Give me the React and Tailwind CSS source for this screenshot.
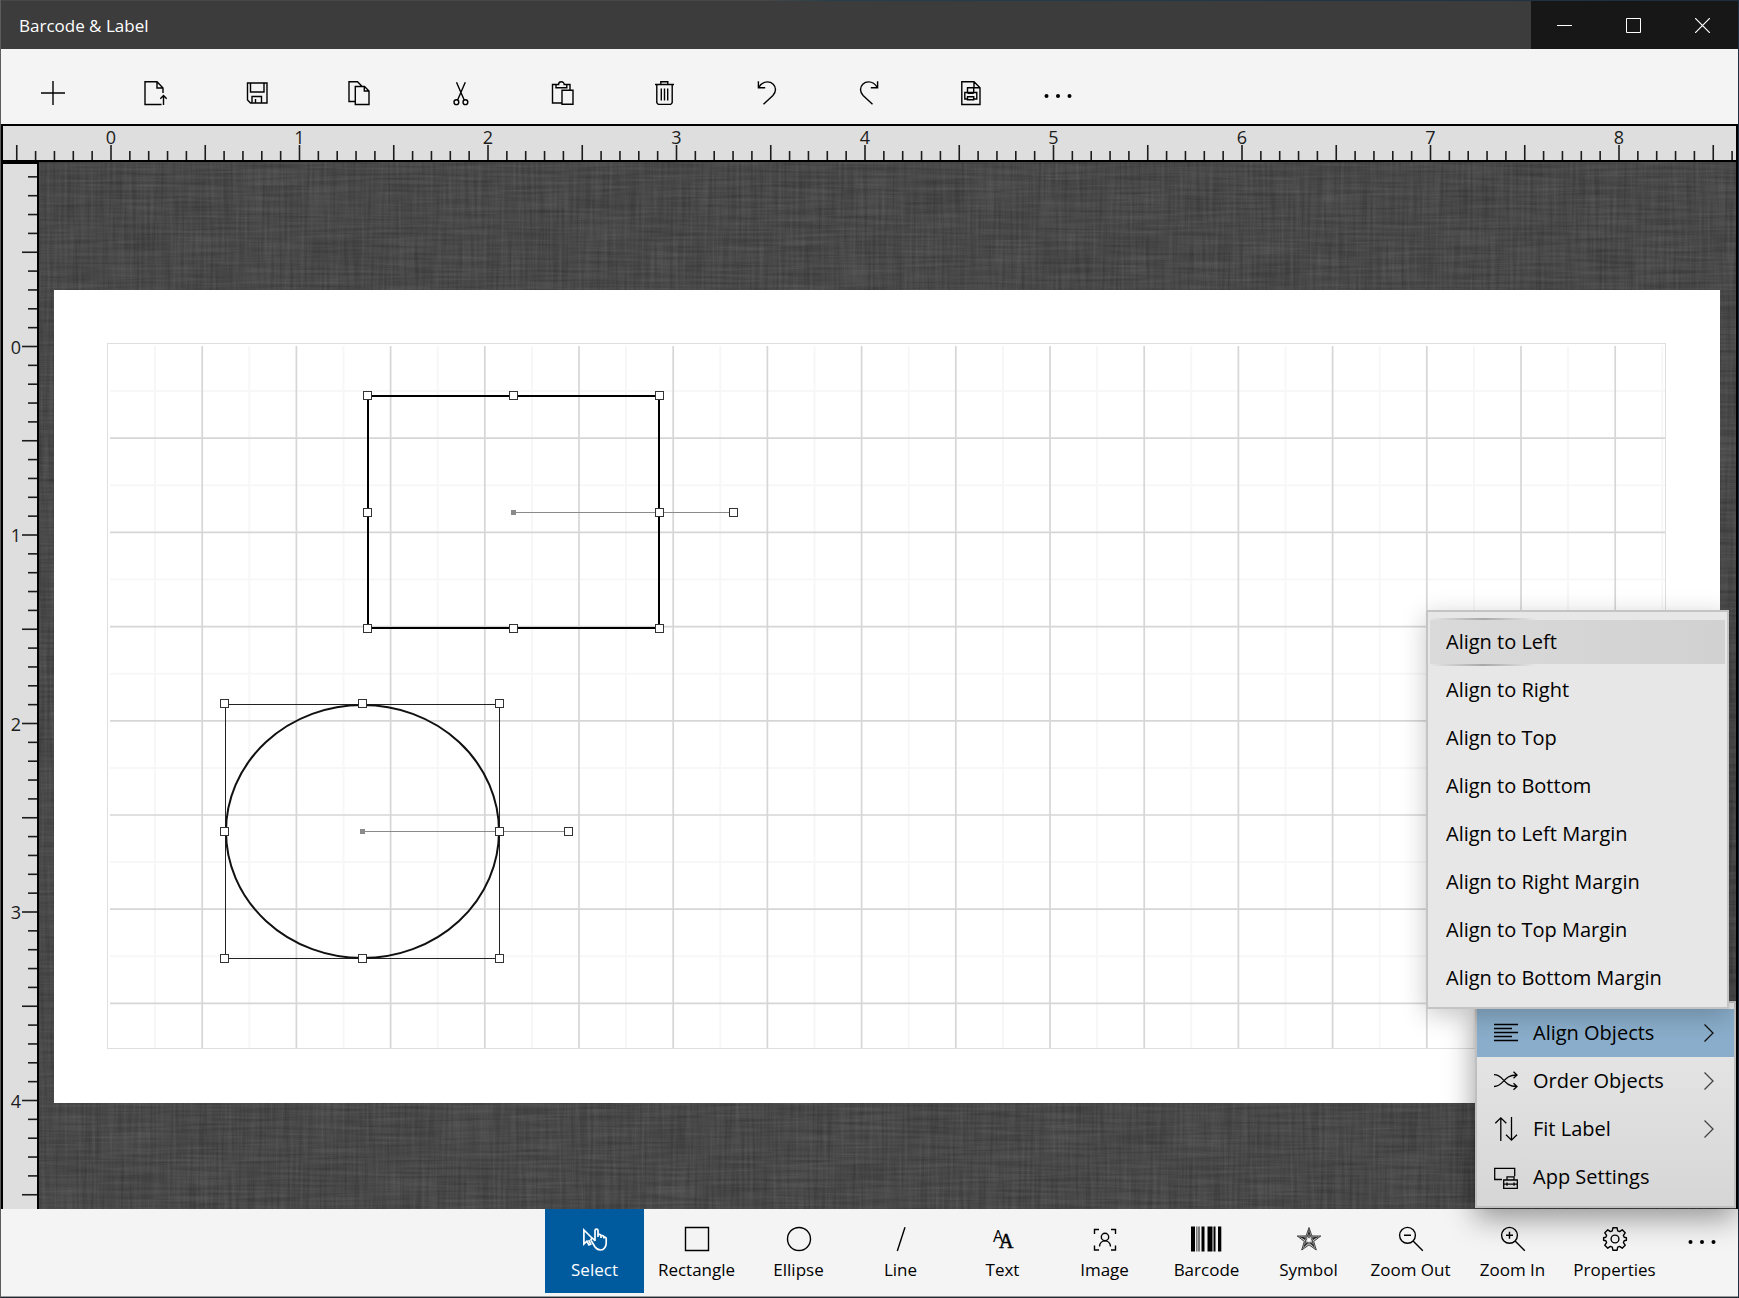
import { useState } from "react";

const UNIT = 188.5;
const GRID_STEP = 47.1;

function Icon({ children, size = 24, className = "", strokeWidth = 1.4 }) {
  return (
    <svg
      width={size}
      height={size}
      viewBox="0 0 24 24"
      fill="none"
      stroke="currentColor"
      strokeWidth={strokeWidth}
      className={`shrink-0 overflow-visible ${className}`}
      aria-hidden="true"
    >
      {children}
    </svg>
  );
}

function Dots() {
  return (
    <Icon>
      <g fill="currentColor" stroke="none">
        <circle cx="0.5" cy="12" r="2" />
        <circle cx="12" cy="12" r="2" />
        <circle cx="23.5" cy="12" r="2" />
      </g>
    </Icon>
  );
}

const fileActions = [
  { label: "New", icon: <path d="M12 0v24M0 12h24" /> },
  {
    label: "Open",
    icon: <path d="M20 12V7l-6-6.2H2v22.7h16.5M14 .8V7h6M20.5 24v-9.5M17.3 17.7l3.2-3.2 3.2 3.2" />,
  },
  {
    label: "Save",
    icon: <path d="M2.5 2H22v20H5.5l-3-3zM5.5 2v9H19V2M7 22v-6.5h9.5V22M10.5 18v4" />,
  },
  {
    label: "Copy",
    icon: <path d="M8 20.5H2V.8h8.5l4.7 4.7M8.3 5.5h9.2L22 10v13.5H8.3zM17.3 5.5V10H22" />,
  },
  {
    label: "Cut",
    icon: (
      <>
        <path d="M7.5 1.3 15.2 19M16.3 1.3 8.6 19" />
        <circle cx="7.4" cy="21.2" r="2.4" />
        <circle cx="16.4" cy="21.2" r="2.4" />
      </>
    ),
  },
  {
    label: "Paste",
    icon: (
      <path d="M11 22H1.500V3.500H5M15.500 3.500H19V9M5 3.500v3.300h10.800V3.500h-2.600c0-3.700-5.600-3.700-5.600 0zM11 9.300h11v14H11z" />
    ),
  },
  {
    label: "Delete",
    icon: <path d="M2 3.500h19M7.800 3.500V.8h7v2.700M3.800 3.500v18.300l1.500 1.600h12.400l1.500-1.600V3.500M8.300 7.500v12M11.500 7.500v12M14.700 7.500v12" />,
  },
  {
    label: "Undo",
    icon: <path d="M3.4.3v6.5h6.800M3.600 6.600C6 2.600 9 .9 12.300.9c4.900 0 8.200 3.500 8.200 7.700 0 2.300-1 4.100-2.600 5.800L8.500 23.300" />,
  },
  {
    label: "Redo",
    icon: <path d="M20.600.3v6.500h-6.800M20.400 6.600C18 2.600 15 .9 11.700.9 6.800.9 3.500 4.400 3.500 8.600c0 2.300 1 4.100 2.600 5.800l9.400 8.900" />,
  },
  {
    label: "Print",
    icon: (
      <path d="M2.800.8H15l6 6v16.700H2.800zM15 .8v6h6M8.500 12V6.800h6.200V12M8.500 18H5.800v-6.500h12V18h-3M8.500 12.300h6.200M8.500 15.700h6.200v3H8.500z" />
    ),
  },
];

const tools = [
  {
    label: "Select",
    icon: (
      <g strokeWidth="1.700">
        <path d="M9.500 11.500.9 3v14l3-2.800 2 3.800 1.800-.8-2-4" />
        <path d="M12 14V3.600c0-2 3-2 3 0V10M15 8.300c.3-1.300 3-1.200 3 .4V11M18 9.200c.5-1 2.800-.8 2.800.6v1.700M20.800 10.500c.8-.8 2.400-.3 2.400 1.200v4.600c0 3-2 6.700-5.600 6.700-3 0-4.400-1.200-5.700-3.200l-3.700-6.200c-.9-1.600 1-2.800 2.200-1.600l1.700 1.900" />
      </g>
    ),
  },
  { label: "Rectangle", icon: <path d="M.5.5h23v23H.5z" /> },
  { label: "Ellipse", icon: <circle cx="12" cy="12" r="11.500" /> },
  { label: "Line", icon: <path d="M16 .3 8.300 24" /> },
  {
    label: "Text",
    icon: (
      <g fill="currentColor" stroke="none">
        <text x="2" y="15" fontSize="16" fontFamily="Open Sans">A</text>
        <text x="8" y="21" fontSize="20" stroke="currentColor" strokeWidth="0.5" fontFamily="Liberation Serif">A</text>
      </g>
    ),
  },
  {
    label: "Image",
    icon: (
      <>
        <path d="M1.500 7V2.500H6M18 2.500h4.500V7M22.500 18.500V23H18M6 23H1.500v-4.500" />
        <circle cx="12" cy="10" r="3.700" />
        <path d="M6.500 19.500c.5-7.500 10.500-7.500 11 0" />
      </>
    ),
  },
  {
    label: "Barcode",
    icon: (
      <g fill="currentColor" stroke="none">
        <path d="M-4-.5H0v25h-4zM1.500-.5h.8v25h-.8zM3.500-.5h1v25h-1zM6.500-.5h3v25h-3zM12.500-.5h5v25h-5zM18.500-.5h2v25h-2zM23-.5h3.300v25H23z" />
      </g>
    ),
  },
  {
    label: "Symbol",
    icon: (
      <>
        <path
          d="M12 .5 14.900 8.900 23.800 9l-7.100 5.400 2.600 8.600-7.300-5.100L4.700 23l2.600-8.600L.2 9l8.900-.1z"
          fill="#c4c4c4"
          strokeWidth="0.700"
        />
        <path d="M12 3v8M21 9.900l-7 2.400M17.500 20.500l-4-5.500M6.500 20.500l4-5.500M3 9.900l7 2.400" strokeWidth="0.800" />
        <path d="M12 5.500l2 4.600 4.800.3-3.700 3.200 1.400 4.900-4.500-2.800-4.500 2.800 1.400-4.900-3.700-3.200 4.800-.3z" strokeWidth="0.700" />
        <circle cx="12" cy="13" r="1.800" fill="white" stroke="none" />
      </>
    ),
  },
  {
    label: "Zoom Out",
    icon: (
      <>
        <circle cx="8.500" cy="8.300" r="7.900" />
        <path d="M14.100 13.900l9.700 9.900M5 8.300h7" />
      </>
    ),
  },
  {
    label: "Zoom In",
    icon: (
      <>
        <circle cx="8.500" cy="8.300" r="7.900" />
        <path d="M14.100 13.900l9.700 9.900M5 8.300h7M8.500 4.800v7" />
      </>
    ),
  },
  {
    label: "Properties",
    icon: (
      <>
        <path
          strokeLinejoin="round"
          d="M9.900.8h4.200l.6 3 1.900.8 2.600-1.800 3 3-1.800 2.600.8 1.900 2.200.5v2.400l-2.200.5-.8 1.900 1.800 2.600-3 3-2.600-1.800-1.900.8-.6 3H9.900l-.6-3-1.900-.8-2.600 1.800-3-3 1.800-2.600-.8-1.900-2.200-.5v-2.400l2.200-.5.8-1.900-1.800-2.600 3-3 2.600 1.800 1.900-.8z"
        />
        <circle cx="12" cy="12" r="3.900" />
      </>
    ),
  },
];

const alignItems = [
  "Align to Left",
  "Align to Right",
  "Align to Top",
  "Align to Bottom",
  "Align to Left Margin",
  "Align to Right Margin",
  "Align to Top Margin",
  "Align to Bottom Margin",
];

const menuItems = [
  { label: "Align Objects", sub: true, icon: <path d="M0 3.500h24M0 7.500h18M0 11.500h24M0 15.500h18M0 19.500h24" /> },
  {
    label: "Order Objects",
    sub: true,
    icon: (
      <path d="M0 5.700c10 0 9 11.800 22.500 11.800M0 17.500C10 17.500 9 6 22.500 6M19.500 2.800 23 6l-3.500 3.200M19.500 14.300l3.500 3.200-3.500 3.200" />
    ),
  },
  {
    label: "Fit Label",
    sub: true,
    icon: <path d="M6.800 24V.8M1.300 6.300 6.800.8l5.500 5.500M17.500 0v23.200M12 17.700l5.500 5.500 5.500-5.500" />,
  },
  {
    label: "App Settings",
    sub: false,
    icon: <path d="M8 14.500H.7V3.300h20v8M9.700 15h13.600v8.300H9.700zM13 15v-3.200h7V15M9.700 19.200h13.600M13 17.500v3.300M20 17.500v3.300" />,
  },
];

function Ticks({ vertical, origin, from, to }) {
  const ticks = [];
  for (let i = from; i <= to; i++) {
    const pos = origin + (i * UNIT) / 10;
    const start = i % 5 === 0 ? 19 : 25;
    ticks.push(
      vertical ? (
        <line key={i} x1={start} x2="34" y1={pos} y2={pos} />
      ) : (
        <line key={i} y1={start} y2="34" x1={pos} x2={pos} />
      )
    );
  }
  const labels = [];
  for (let n = 0; n * 10 <= to; n++) {
    const pos = origin + n * UNIT;
    labels.push(
      <text key={n} x={vertical ? 13 : pos} y={vertical ? pos + 7 : 18} textAnchor="middle">
        {n}
      </text>
    );
  }
  return (
    <svg className="block h-full w-full" aria-hidden="true">
      <g stroke="#1c1c1c" strokeWidth="1.6">{ticks}</g>
      <g fill="#1c1c1c" fontSize="18">{labels}</g>
    </svg>
  );
}

// two stretched noise layers, crossed like threads
function Linen() {
  return (
    <svg className="absolute inset-0 h-full w-full" aria-hidden="true">
      <filter id="warp" x="0" y="0" width="100%" height="100%" colorInterpolationFilters="sRGB">
        <feTurbulence type="fractalNoise" baseFrequency="0.35 0.015" numOctaves="3" seed="4" />
        <feColorMatrix values="0.2 0 0 0 0.185  0.2 0 0 0 0.185  0.2 0 0 0 0.185  0 0 0 0 1" />
      </filter>
      <filter id="weft" x="0" y="0" width="100%" height="100%" colorInterpolationFilters="sRGB">
        <feTurbulence type="fractalNoise" baseFrequency="0.015 0.35" numOctaves="3" seed="9" />
        <feColorMatrix values="0.2 0 0 0 0.185  0.2 0 0 0 0.185  0.2 0 0 0 0.185  0 0 0 0 1" />
      </filter>
      <rect width="100%" height="100%" filter="url(#warp)" />
      <rect width="100%" height="100%" filter="url(#weft)" opacity="0.5" />
    </svg>
  );
}

function Handles({ xs, ys, rotateX }) {
  const [left, mid, right] = xs;
  const [top, center, bottom] = ys;
  const spots = [
    [left, top], [mid, top], [right, top],
    [left, center], [right, center], [rotateX, center],
    [left, bottom], [mid, bottom], [right, bottom],
  ];
  return (
    <g>
      <line x1={mid} x2={rotateX} y1={center} y2={center} stroke="#8a8a8a" />
      <rect x={mid - 2.5} y={center - 2.5} width="5" height="5" fill="#8a8a8a" />
      {spots.map(([x, y]) => (
        <rect key={`${x}-${y}`} x={x - 4} y={y - 4} width="8" height="8" fill="white" stroke="#333" />
      ))}
    </g>
  );
}

function LabelGrid() {
  const steps = Array.from({ length: 40 }, (_, i) => i + 1);
  const minor = steps.filter((i) => i % 2 === 1);
  const major = steps.filter((i) => i % 2 === 0);
  const lines = (list) =>
    list.map((i) => (
      <g key={i}>
        <line x1={i * GRID_STEP} x2={i * GRID_STEP} y1="2" y2="100%" />
        <line y1={i * GRID_STEP} y2={i * GRID_STEP} x1="2" x2="100%" />
      </g>
    ));
  return (
    <svg className="block h-full w-full" role="img" aria-label="Label">
      <g stroke="#f7f7f7" strokeWidth="2">{lines(minor)}</g>
      <g stroke="#d6d6d6" strokeWidth="1.7">{lines(major)}</g>
      <rect x="260" y="52" width="291" height="232" fill="none" stroke="black" strokeWidth="2" />
      <Handles xs={[259.5, 405.5, 551.5]} ys={[51.5, 168.5, 284.5]} rotateX={625.5} />
      <rect x="117.5" y="360.5" width="274" height="254" fill="none" stroke="#222" />
      <ellipse cx="254.5" cy="487.5" rx="136.5" ry="126.5" fill="none" stroke="#111" strokeWidth="2" />
      <Handles xs={[116.5, 254.5, 391.5]} ys={[359.5, 487.5, 614.5]} rotateX={460.5} />
    </svg>
  );
}

const captionButton = "flex w-[69px] items-center justify-center pr-0.5";

function TitleBar() {
  return (
    <header className="flex h-12 shrink-0 items-center justify-between bg-[#3c3c3c] text-white">
      <h1 className="pl-[18px] pt-0.5 text-[17px]">Barcode &amp; Label</h1>
      <div className="flex h-full bg-[#171717]">
        <button type="button" aria-label="Minimize" className={captionButton}>
          <svg width="15" height="15" stroke="white"><path d="M0 7.500h15" /></svg>
        </button>
        <button type="button" aria-label="Maximize" className={captionButton}>
          <svg width="15" height="15" stroke="white" fill="none"><path d="M.5.5h14v14H.5z" /></svg>
        </button>
        <button type="button" aria-label="Close" className={captionButton}>
          <svg width="15" height="15" stroke="white" strokeWidth="1.2"><path d="M0 0l15 15M15 0 0 15" /></svg>
        </button>
      </div>
    </header>
  );
}

function AlignMenu() {
  return (
    <div
      role="menu"
      aria-label="Align Objects"
      className="absolute bottom-[200px] right-[7px] z-20 w-[303px] border-2 border-[#c4c4c4] bg-[#e7e7e7] pb-[5px] pt-[6px] shadow-[0_6px_24px_rgba(0,0,0,0.22)]"
    >
      {alignItems.map((label, i) =>
        i === 0 ? (
          <div key={label} className="mx-0.5 h-12 bg-[linear-gradient(90deg,#e7e7e7_0%,#a8a8a8_18%,#e7e7e7_36%)] py-0.5">
            <button
              type="button"
              role="menuitem"
              className="flex h-11 w-full items-center bg-linear-to-r from-[#dadada] to-[#d1d1d1] pl-4 text-left"
            >
              {label}
            </button>
          </div>
        ) : (
          <button key={label} type="button" role="menuitem" className="flex h-12 w-full items-center pl-[18px] text-left">
            {label}
          </button>
        )
      )}
    </div>
  );
}

function MoreMenu() {
  return (
    <div
      role="menu"
      aria-label="More"
      className="absolute bottom-px right-0 z-10 w-[261px] border-2 border-[#bfbfbf] bg-linear-to-b from-[#e9e9e9] to-[#d6d6d6] pb-[5px] pt-[6px] shadow-[0_10px_28px_rgba(0,0,0,0.4)]"
    >
      {menuItems.map((item, i) => (
        <button
          key={item.label}
          type="button"
          role="menuitem"
          className={`flex h-12 w-full items-center pl-[17px] pr-5 text-left ${i === 0 ? "bg-[#89adca]" : ""}`}
        >
          <Icon strokeWidth={1.3}>{item.icon}</Icon>
          <span className="ml-[15px] flex-1">{item.label}</span>
          {item.sub && (
            <svg width="10" height="18" fill="none" stroke={i === 0 ? "#111" : "#444"} strokeWidth="1.3">
              <path d="M.5.5 9 9 .5 17.500" />
            </svg>
          )}
        </button>
      ))}
    </div>
  );
}

export default function App() {
  const [tool, setTool] = useState("Select");

  return (
    <div className="flex h-screen flex-col border-x border-b border-l-[#5c5c5c] border-r-[#1d2f42] border-b-[#1b2733] bg-[#f4f4f4] font-['Open_Sans',sans-serif] text-black">
      <div className="h-px shrink-0 bg-[linear-gradient(90deg,#474747_44%,#24404c_48%,#1e2d3f_100%)]" />
      <TitleBar />

      <nav aria-label="File actions" className="flex h-[75px] shrink-0 pt-1.5 pl-px">
        {fileActions.map((action) => (
          <button
            key={action.label}
            type="button"
            aria-label={action.label}
            className="flex w-[102px] items-center justify-center pt-1.5"
          >
            <Icon>{action.icon}</Icon>
          </button>
        ))}
        <button type="button" aria-label="More actions" className="flex w-[72px] items-center justify-center pt-3">
          <Dots />
        </button>
      </nav>

      <div className="h-[38px] shrink-0 border-2 border-black bg-[#dedede]">
        <Ticks origin={108} from={-5} to={86} />
      </div>

      <main className="relative flex min-h-0 flex-1 border-x-2 border-black">
        <div className="w-9 shrink-0 border-r-2 border-t-2 border-black bg-[#dedede]">
          <Ticks vertical origin={182.5} from={-9} to={45} />
        </div>
        <div className="relative flex min-w-0 flex-1 bg-[#484848] pb-[106px] pl-[15px] pr-4 pt-32">
          <Linen />
          <div className="relative flex-1 bg-white pb-[54px] pl-[53px] pr-[54px] pt-[53px]">
            <div className="h-full border border-[#dedede]">
              <LabelGrid />
            </div>
          </div>
        </div>
        <div className="text-[20px]">
          <MoreMenu />
          <AlignMenu />
        </div>
      </main>

      <nav aria-label="Tools" className="flex h-[88px] shrink-0 justify-end gap-[3px] border-b border-[#9a9a9a] pb-[3px]">
        {tools.map((t) => (
          <button
            key={t.label}
            type="button"
            aria-pressed={tool === t.label}
            onClick={() => setTool(t.label)}
            className={`flex w-[99px] flex-col items-center gap-[7px] pt-[18px] text-[17px] leading-6 whitespace-nowrap ${
              tool === t.label ? "bg-[#005a9e] text-white" : ""
            }`}
          >
            <Icon>{t.icon}</Icon>
            {t.label}
          </button>
        ))}
        <button type="button" aria-label="More tools" className="flex w-[71px] justify-center pr-0.5 pt-[21px]">
          <Dots />
        </button>
      </nav>
    </div>
  );
}
